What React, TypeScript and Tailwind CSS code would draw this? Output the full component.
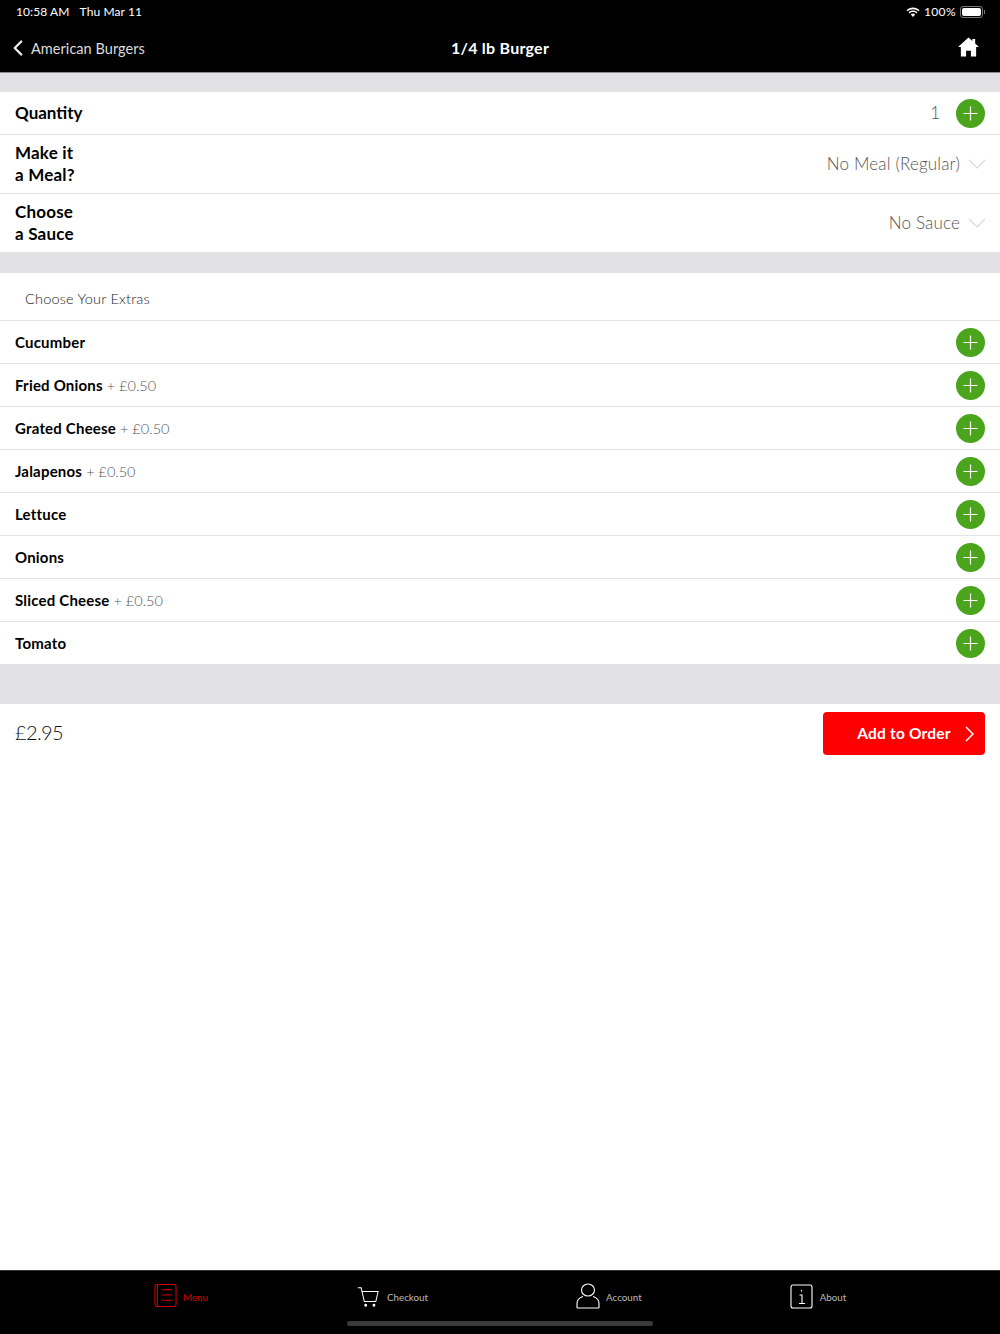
import { ChevronLeft } from "lucide-react";

const extras = [
  { name: "Cucumber" },
  { name: "Fried Onions", price: "+ £0.50" },
  { name: "Grated Cheese", price: "+ £0.50" },
  { name: "Jalapenos", price: "+ £0.50" },
  { name: "Lettuce" },
  { name: "Onions" },
  { name: "Sliced Cheese", price: "+ £0.50" },
  { name: "Tomato" },
];

const PlusButton = () => (
  <span className="flex h-[29px] w-[29px] items-center justify-center rounded-full bg-[#4aa41c]">
    <svg width="15" height="15" viewBox="0 0 15 15" fill="none" stroke="white" strokeWidth="1.2">
      <path d="M7.500 .5v14M.5 7.500h14" />
    </svg>
  </span>
);

const Chevron = () => (
  <svg width="18" height="10" viewBox="0 0 18 10" fill="none" stroke="#d9d9dc" strokeWidth="1.2" className="-mr-[1px]">
    <path d="M1 1l8 8 8-8" />
  </svg>
);

const SelectRow = ({ a, b, value }: { a: string; b: string; value: string }) => (
  <div className="flex h-[59px] items-center justify-between border-b border-[#e4e4e6] px-[15px]">
    <div className="text-[17px] leading-[22.5px] font-bold tracking-[0.2px] text-black">
      {a}
      <br />
      {b}
    </div>
    <div className="flex items-center gap-[8px]">
      <span className="text-[17px] font-light tracking-[0.17px] text-[#555]">{value}</span>
      <Chevron />
    </div>
  </div>
);

export default function App() {
  return (
    <div className="flex h-[1334px] w-[1000px] flex-col overflow-hidden bg-white font-['Lato',sans-serif]">
      <header className="h-[73px] shrink-0 border-b border-[#8a8a8a] bg-black text-white">
        <div className="flex h-[24px] items-center justify-between pl-[16px] pr-[15px] text-[12px] tracking-[0.1px]">
          <div className="flex gap-[10px]">
            <span>10:58 AM</span>
            <span>Thu Mar 11</span>
          </div>
          <div className="flex items-center gap-[4px]">
            <svg width="14" height="11" viewBox="0 0 14 11" fill="white">
              <path d="M7 2.200c2.100 0 4 .8 5.400 2.100l1-1.100C11.700 1.600 9.500.6 7 .6S2.300 1.600.6 3.200l1 1.100C3 3 4.900 2.200 7 2.200z" />
              <path d="M7 5.100c1.300 0 2.500.5 3.400 1.300l1-1.100C10.200 4.200 8.700 3.600 7 3.600s-3.200.6-4.400 1.700l1 1.100C4.500 5.600 5.700 5.100 7 5.100z" />
              <path d="M7 6.600c-.9 0-1.600.3-2.200.8L7 10l2.200-2.600C8.600 6.900 7.900 6.600 7 6.600z" />
            </svg>
            <span className="tracking-[0.4px]">100%</span>
            <div className="flex items-center gap-[1px]">
              <div className="h-[12px] w-[23px] rounded-[3px] border border-[#777] p-[1px]">
                <div className="h-full w-full rounded-[2px] bg-white" />
              </div>
              <div className="h-[4px] w-[1px] bg-[#777]" />
            </div>
          </div>
        </div>
        <div className="relative flex h-[48px] items-center justify-between pr-[21px] pl-[5px]">
          <div className="flex items-center gap-0">
            <ChevronLeft size={26} strokeWidth={2.2} className="text-[#eeeeee]" />
            <span className="pt-[2px] text-[14.5px] tracking-[0.05px] text-[#dddddd]">American Burgers</span>
          </div>
          <span className="absolute left-0 right-0 text-center text-[16px] font-bold tracking-[0.25px]">1/4 lb Burger</span>
          <svg width="21" height="20" viewBox="0 0 22 20" fill="white" className="-translate-y-[1px]">
            <path d="M11 0L0 10h3v10h5.500v-6h5v6H19V10h3l-4-3.600V1.500h-3v2.300z" />
          </svg>
        </div>
      </header>

      <div className="h-[19px] shrink-0 bg-[#e1e1e3]" />

      <div className="flex h-[43px] items-center justify-between border-b border-[#e4e4e6] px-[15px]">
        <span className="text-[17px] font-bold text-black">Quantity</span>
        <div className="flex items-center gap-[16px]">
          <span className="text-[17px] font-light text-[#555]">1</span>
          <PlusButton />
        </div>
      </div>
      <SelectRow a="Make it" b="a Meal?" value="No Meal (Regular)" />
      <SelectRow a="Choose" b="a Sauce" value="No Sauce" />

      <div className="h-[20px] shrink-0 bg-[#e1e1e3]" />

      <div className="flex h-[48px] shrink-0 items-center border-b border-[#e4e4e6] pt-[4px] pl-[25px] text-[14.5px] font-light tracking-[0.2px] text-[#222]">
        Choose Your Extras
      </div>

      {extras.map((extra, i) => (
        <div
          key={extra.name}
          className={`flex shrink-0 items-center justify-between px-[15px] ${i < extras.length - 1 ? "h-[43px] border-b border-[#e4e4e6]" : "h-[42px]"}`}
        >
          <div className="text-[15px] tracking-[0.2px]">
            <span className="font-bold text-black">{extra.name}</span>
            {extra.price && <span className="ml-[4px] text-[14.5px] font-light tracking-normal text-[#555]">{extra.price}</span>}
          </div>
          <PlusButton />
        </div>
      ))}

      <div className="h-[40px] shrink-0 bg-[#e1e1e3]" />

      <div className="flex h-[59px] shrink-0 items-center justify-between px-[15px]">
        <span className="-translate-y-[2px] text-[20px] font-light tracking-[-0.6px] text-[#111]">£2.95</span>
        <button className="relative flex h-[43px] w-[162px] items-center justify-center rounded-[4px] bg-[#ff0000] text-[15.5px] font-bold tracking-[0.2px] text-white">
          Add to Order
          <svg className="absolute right-[11px]" width="9" height="16" viewBox="0 0 9 16" fill="none" stroke="white" strokeWidth="1.5">
            <path d="M1 1l7 7-7 7" />
          </svg>
        </button>
      </div>

      <div className="flex-1" />

      <nav className="relative h-[64px] shrink-0 border-t border-[#333] bg-black">
        <div className="flex h-[52px] items-center text-[9.8px]">
          <div className="flex w-[216px] shrink-0 items-center justify-end gap-[6px] pr-[8px] text-[#d40000]">
            <svg width="23" height="25" viewBox="0 0 24 25" fill="none" stroke="#d40000" strokeWidth="1.1" className="-translate-y-[2px]">
              <rect x="1" y="1" width="22" height="23" rx="2" />
              <path d="M3.500 1v23M8 6.500h11M8 12h11M8 17.500h11" />
            </svg>
            Menu
          </div>
          <div className="ml-[141px] flex items-center gap-[8px] text-[#bbbbbb]">
            <svg width="22" height="22" viewBox="0 0 24 22" fill="none" stroke="white" strokeWidth="1.1">
              <path d="M1 1h3.500l3.500 15h12.500l2.500-11H5.500" />
              <circle cx="9.500" cy="20" r="1" fill="white" />
              <circle cx="18.500" cy="20" r="1" fill="white" />
            </svg>
            Checkout
          </div>
          <div className="ml-[148px] flex items-center gap-[6px] text-[#bbbbbb]">
            <svg width="24" height="26" viewBox="0 0 24 26" fill="none" stroke="white" strokeWidth="1.1" className="-translate-y-[1px]">
              <ellipse cx="12" cy="7" rx="6.500" ry="6" />
              <path d="M1 25v-4.500c0-3.500 3-6 6-7M23 25v-4.500c0-3.500-3-6-6-7M1 25h22" />
            </svg>
            Account
          </div>
          <div className="ml-[148px] flex items-center gap-[7px] text-[#bbbbbb]">
            <svg width="23" height="25" viewBox="0 0 23 25" fill="none" stroke="white" strokeWidth="1.1" className="-translate-y-[1px]">
              <rect x="1" y="1" width="21" height="23" rx="2" />
              <path d="M9.500 11h2.500v8.500M9 19.500h6M11.500 6v1.500" />
            </svg>
            About
          </div>
        </div>
        <div className="absolute bottom-[8px] left-[347px] h-[5px] w-[306px] rounded-full bg-[#3a3a3a]" />
      </nav>
    </div>
  );
}
